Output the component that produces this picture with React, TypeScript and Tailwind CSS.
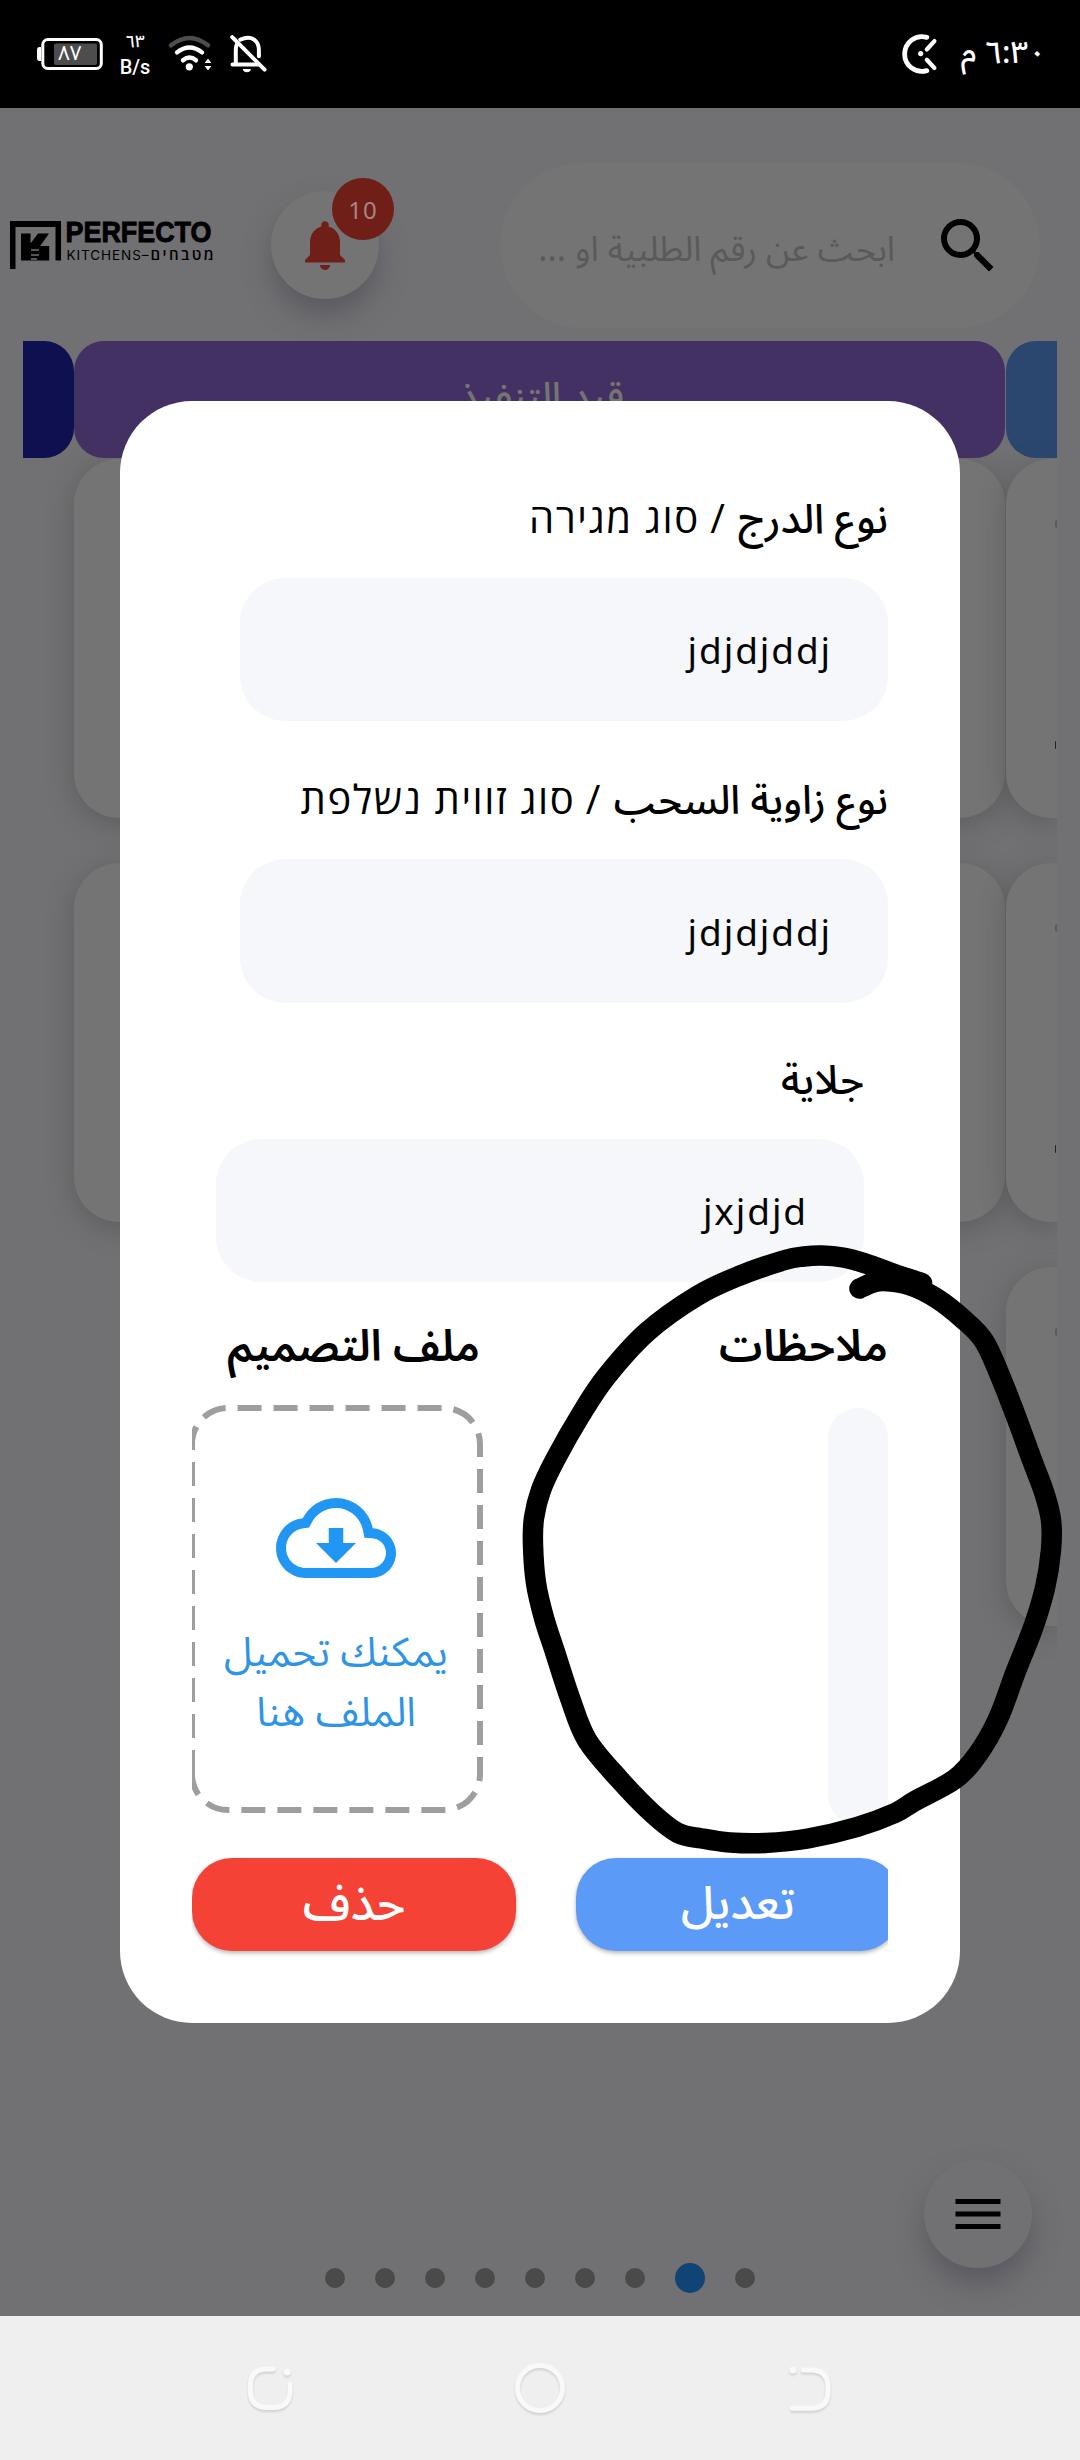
import type { ReactNode } from 'react';
import { MdMenu, MdNotifications, MdOutlineCloudDownload, MdSearch } from 'react-icons/md';

const AR = "font-['Noto_Sans_Arabic','Open_Sans',sans-serif]";

type Point = [number, number];

// Freehand marker stroke around the notes field, page coordinates.
const markerLoop: Point[] = [
  [922, 1283], [900, 1276], [864, 1263], [843, 1257.5], [822, 1255.5], [804, 1256.5], [785, 1260], [740, 1275.5], [697, 1296],
  [647, 1332], [606, 1377], [580, 1416], [555, 1460], [541, 1490], [534, 1518], [533, 1545], [536, 1583],
  [544, 1618], [555, 1652], [570, 1698], [587, 1740], [619, 1779], [652, 1813], [678, 1833], [702, 1838.5],
  [730, 1842.5], [765, 1843], [808, 1838.5], [857, 1827], [895, 1813], [915, 1801], [955, 1779], [978, 1754],
  [998, 1719], [1016, 1671], [1033, 1628], [1045, 1588], [1051, 1550], [1051, 1520], [1044, 1492], [1032, 1460],
  [1017, 1419], [1001, 1378], [984, 1341], [963, 1319], [936, 1298], [909, 1285], [884, 1281], [872, 1283], [859.5, 1288.5],
];

function smooth(points: Point[]): string {
  let d = `M${points[0][0]} ${points[0][1]}`;
  for (let i = 0; i < points.length - 1; i++) {
    const p0 = points[Math.max(i - 1, 0)];
    const p1 = points[i];
    const p2 = points[i + 1];
    const p3 = points[Math.min(i + 2, points.length - 1)];
    d += `C${p1[0] + (p2[0] - p0[0]) / 6} ${p1[1] + (p2[1] - p0[1]) / 6} ${p2[0] - (p3[0] - p1[0]) / 6} ${p2[1] - (p3[1] - p1[1]) / 6} ${p2[0]} ${p2[1]}`;
  }
  return d;
}

function StatusBar() {
  return (
    <header className="flex h-[108px] items-start justify-between bg-black text-white">
      <div className="flex items-start pl-[36px]">
        <div className="relative mt-[37px] h-[34px] w-[67px]">
          <svg className="h-[34px] w-[67px]" viewBox="0 0 67 34" fill="none">
            <path d="M5 10v14H3.5Q1 24 1 21v-8Q1 10 3.5 10z" fill="#fff" />
            <rect x="6.8" y="2.5" width="58.5" height="29" rx="5" stroke="#fff" strokeWidth="3" />
            <rect x="18" y="6.5" width="43" height="21.5" rx="2" fill="#4d4d4d" />
          </svg>
          <span className="absolute left-[22px] top-[2px] font-['Noto_Sans_Arabic'] text-[20.5px] leading-[30px]">٨٧</span>
        </div>
        <div className="ml-[17px] mt-[32px] flex w-[30px] flex-col items-center">
          <span className="font-['Noto_Sans_Arabic'] text-[17px] font-medium leading-[20px]">٦٣</span>
          <span className="mt-[4px] font-['Roboto'] text-[20px] font-medium leading-[22px]">B/s</span>
        </div>
        <svg className="ml-[18px] mt-[32px] h-[42px] w-[46px]" viewBox="168 32 46 42" fill="none" strokeLinecap="round" strokeWidth="4.4">
          <path d="M171 45.3Q189.5 30.5 208 45.3" stroke="#4d4d4d" />
          <path d="M177 52.4Q189.5 42.4 202 52.4M183 60.3Q189.5 54.8 196 60.3" stroke="#fff" />
          <circle cx="189.3" cy="66.8" r="3.6" fill="#fff" />
          <path d="M208 58.5l3.4 4.6h-6.8zM208 70.5l3.4-4.6h-6.8z" fill="#fff" />
        </svg>
        <svg className="ml-[14px] mt-[32px] h-[44px] w-[42px]" viewBox="228 32 42 44" fill="none" stroke="#fff" strokeWidth="4" strokeLinecap="round">
          <path d="M232.2 37.2L264.6 69.6" />
          <path d="M235.8 64V50q0-4 1.4-6.6M240.3 39.6c12-5 18.600 1.500 18.600 10.600v6M232.500 64.500h25.500" />
          <path d="M242.800 69h8.200q-.7 3.300-4.100 3.300t-4.100-3.300z" fill="#fff" stroke="none" />
        </svg>
      </div>
      <div className="flex items-start pr-[34px]">
        <svg className="mt-[32px] h-[44px] w-[42px]" viewBox="900 32 42 44" fill="none" stroke="#fff" strokeWidth="4.800" strokeLinecap="round">
          <path d="M927.800 37.400A17.300 17.300 0 1 0 927.800 70.600" />
          <path d="M927.800 49.500l7.600-8.400M927.800 59.800l7.600 8.200" strokeWidth="4.200" />
          <circle cx="921.700" cy="53.600" r="2.600" fill="#fff" stroke="none" />
        </svg>
        <span dir="rtl" className="ml-[20px] mt-[33px] whitespace-nowrap font-['Noto_Sans_Arabic'] text-[31px] font-medium leading-[40px]">
          ٦:٣٠ م
        </span>
      </div>
    </header>
  );
}

function Logo() {
  return (
    <svg className="h-[50px] w-[204px] overflow-visible" viewBox="9 220 204 50">
      <path d="M10 221h51v39.500h-5.500V227H15.500v42H10z" />
      <path d="M21 233.500h9.500v10l7.500-10h11l-8.800 12.500h9v14.500H21z" />
      <path d="M31 250h8M31 255h8M31 259h6" stroke="#717173" strokeWidth="1.600" />
      <text x="65.500" y="242" fontFamily="Liberation Sans" fontWeight="700" fontSize="29" textLength="146" lengthAdjust="spacingAndGlyphs" stroke="#000" strokeWidth=".9">
        PERFECTO
      </text>
      <text x="66.500" y="260" fontFamily="Inter" fontWeight="400" fontSize="13.500" textLength="82" lengthAdjust="spacing">
        KITCHENS–
      </text>
      <text x="150.500" y="260" fontFamily="Open Sans" fontWeight="600" fontSize="15" textLength="63" lengthAdjust="spacing">
        מטבחים
      </text>
    </svg>
  );
}

function AppBar() {
  return (
    <div className="flex h-[233px] items-start">
      <div className="ml-[9px] mt-[112px]">
        <Logo />
      </div>
      <div className="relative ml-[58px] mt-[83px] flex h-[108px] w-[108px] items-center justify-center rounded-full bg-[#747474] shadow-[0_16px_26px_rgba(72,68,80,0.5)]">
        <MdNotifications className="h-[60px] w-[60px] text-[#701e18]" />
        <span className="absolute -right-[15px] -top-[13px] flex h-[62px] w-[62px] items-center justify-center rounded-full bg-[#701e18] pt-[2px] font-['Noto_Sans'] text-[24px] tracking-[1px] text-[#a88684]">
          10
        </span>
      </div>
      <div dir="rtl" className="ml-[121px] mt-[55px] flex h-[165px] w-[540px] items-center rounded-full bg-[#747474] pr-[36px]">
        <MdSearch className="h-[72px] w-[72px] text-black" />
        <span className={`${AR} mr-[37px] mt-[9px] whitespace-nowrap text-[34.6px] leading-[60px] text-[#5a5a5a]`}>
          ابحث عن رقم الطلبية او ...
        </span>
      </div>
    </div>
  );
}

function PeekCard() {
  return (
    <div className="relative h-[359px] rounded-l-[45px] bg-[#747474] shadow-[0_6px_27px_rgba(60,62,62,0.4)]">
      <div className="absolute right-0 flex h-full flex-col justify-start pt-[61px]">
        <span className="h-[8px] w-[2px] rounded-l-full bg-[#5a5a5a]" />
        <span className="mt-[213px] h-[8px] w-px rounded-l-full bg-[#222]" />
      </div>
    </div>
  );
}

function Board() {
  return (
    <div className="mx-[23px] flex h-[1700px] overflow-hidden">
      <div className="w-[51px]">
        <div className="h-[117px] rounded-r-[30px] bg-[#0e1050]" />
      </div>
      <div className="w-[931px]">
        <div className={`${AR} relative flex h-[117px] items-center justify-center rounded-[30px] bg-[#433163] pb-[5px] pl-[4px] text-[38px] font-medium leading-[60px] text-[#747474]`} dir="rtl">
          قيد التنفيذ
        </div>
        <div className="mt-px flex flex-col gap-[45px]">
          <div className="h-[359px] rounded-[45px] bg-[#747474] shadow-[0_6px_27px_rgba(60,62,62,0.4)]" />
          <div className="h-[359px] rounded-[45px] bg-[#747474] shadow-[0_6px_27px_rgba(60,62,62,0.4)]" />
        </div>
      </div>
      <div className="ml-px flex-1">
        <div className="h-[117px] rounded-l-[30px] bg-[#2b4770]" />
        <div className="mt-px flex flex-col gap-[45px]">
          <PeekCard />
          <PeekCard />
          <PeekCard />
        </div>
      </div>
    </div>
  );
}

function PageDots() {
  return (
    <div className="flex h-[30px] items-center justify-center gap-[30px]">
      {[0, 1, 2, 3, 4, 5, 6, 7, 8].map((i) => (
        <span key={i} className={i === 7 ? 'h-[30px] w-[30px] rounded-full bg-[#0f4474]' : 'h-[20px] w-[20px] rounded-full bg-[#4a4a4a]'} />
      ))}
    </div>
  );
}

function NavBar() {
  return (
    <nav className="flex h-[144px] items-center justify-center gap-[210px] bg-[#efefef]">
      <svg className="h-[60px] w-[60px] drop-shadow-[0_2px_1px_rgba(0,0,0,0.12)]" viewBox="240 2358 60 60" fill="none" stroke="#f9f9f9" strokeWidth="5" strokeLinecap="round">
        <path d="M273 2369H267Q250.300 2369 250.300 2386V2390Q250.300 2407.500 267 2407.500H273Q290 2407.500 290 2390V2384" />
        <circle cx="287.200" cy="2372" r="3.500" fill="#f9f9f9" stroke="none" />
      </svg>
      <svg className="h-[60px] w-[60px] drop-shadow-[0_2px_1px_rgba(0,0,0,0.12)]" viewBox="0 0 60 60" fill="none" stroke="#f9f9f9" strokeWidth="5">
        <circle cx="30" cy="30" r="22.500" />
      </svg>
      <svg className="h-[60px] w-[60px] drop-shadow-[0_2px_1px_rgba(0,0,0,0.12)]" viewBox="780 2358 60 60" fill="none" stroke="#f9f9f9" strokeWidth="5" strokeLinecap="round">
        <path d="M803.500 2370H811Q828 2370 828 2387V2391.500Q828 2408.300 811 2408.300H792.500" />
        <circle cx="793" cy="2370" r="3.500" fill="#f9f9f9" stroke="none" />
      </svg>
    </nav>
  );
}

function Field({ ar, he, value, className }: { ar: string; he?: string; value: string; className: string }) {
  return (
    <div className={className}>
      <div className={`${AR} h-[60px] whitespace-nowrap font-medium leading-[60px] text-black`}>
        {ar}
        {he && (
          <span className="font-['Open_Sans'] text-[40px] font-normal leading-none">
            <span className="mr-[3px]"> / </span>
            <span className="tracking-[1.6px]">{he}</span>
          </span>
        )}
      </div>
      <div className="mt-[28px] flex h-[143.5px] w-[648px] items-center rounded-[45px] bg-[#f5f7fb] pr-[56px] pt-px font-['Noto_Sans'] text-[37px] tracking-[1.9px] text-[#050505]">
        <span dir="ltr">{value}</span>
      </div>
    </div>
  );
}

function Heading({ children }: { children: ReactNode }) {
  return <h2 className={`${AR} whitespace-nowrap text-[43.5px] font-semibold leading-[60px] text-black`}>{children}</h2>;
}

function Dialog() {
  return (
    <section dir="rtl" className="absolute left-[120px] top-[401px] flex h-[1621.5px] w-[840px] flex-col rounded-[72px] bg-white px-[72px] pt-[88.5px]">
      <Field ar="نوع الدرج" he="סוג מגירה" value="jdjdjddj" className="text-[41px]" />
      <Field ar="نوع زاوية السحب" he="סוג זווית נשלפת" value="jdjdjddj" className="mt-[50px] text-[39.9px]" />
      <Field ar="جلاية" value="jxjdjd" className="mr-[24px] mt-[48px] text-[40.5px]" />

      <div className="mt-[34.5px] flex justify-between">
        <div>
          <Heading>ملاحظات</Heading>
          <div className="mt-[31px] h-[417px] w-[60px] rounded-[30px] bg-[#f5f7fb]" />
        </div>
        <div className="w-[288px]">
          <Heading>ملف التصميم</Heading>
          <div className="relative mt-[31px] flex h-[402px] flex-col items-center pt-[70px]">
            <svg className="absolute left-0 top-[-3px] h-[408px] w-[291px]" viewBox="0 -3 291 408" fill="none">
              <path d="M0 366V36A36 36 0 0 1 36 0H252A36 36 0 0 1 288 36V366A36 36 0 0 1 252 402H36A36 36 0 0 1 0 366" stroke="#9e9e9e" strokeWidth="6" strokeDasharray="24 12" />
            </svg>
            <MdOutlineCloudDownload className="h-[120px] w-[120px] text-[#2196f3]" />
            <p className={`${AR} mt-[25px] w-[240px] text-center text-[40.5px] leading-[60px] text-[#2f94e4]`}>
              يمكنك تحميل
              <br />
              الملف هنا
            </p>
          </div>
        </div>
      </div>

      <div className={`${AR} -mt-[15px] flex w-[696px] justify-between overflow-hidden pb-[6px] pt-[48px] font-medium leading-[93px] text-white`}>
        <div className="w-[312px] shrink-0">
          <button className="-mr-[12px] h-[93px] w-[324px] rounded-[40px] bg-[#5c9af8] text-[46.5px] shadow-[0_2px_4px_rgba(0,0,0,0.3)]">تعديل</button>
        </div>
        <button className="h-[93px] w-[324px] rounded-[40px] bg-[#f44336] text-[48px] shadow-[0_2px_4px_rgba(0,0,0,0.3)]">حذف</button>
      </div>
    </section>
  );
}

export default function App() {
  return (
    <div dir="ltr" className="relative flex h-[2460px] w-[1080px] flex-col overflow-hidden bg-[#717173]">
      <StatusBar />
      <AppBar />
      <Board />
      <div className="flex-1" />
      <div className="mb-[23px]">
        <PageDots />
      </div>
      <NavBar />
      <button className="absolute left-[924px] top-[2160px] flex h-[108px] w-[108px] items-center justify-center rounded-full bg-[#717173] shadow-[0_16px_26px_rgba(72,68,80,0.5)]">
        <MdMenu className="h-[60px] w-[60px] text-black" />
      </button>
      <Dialog />
      <svg className="pointer-events-none absolute left-0 top-0 h-[2460px] w-[1080px]" viewBox="0 0 1080 2460" fill="none">
        <path d={smooth(markerLoop)} stroke="#000" strokeWidth="20.500" strokeLinecap="round" strokeLinejoin="round" />
      </svg>
    </div>
  );
}
